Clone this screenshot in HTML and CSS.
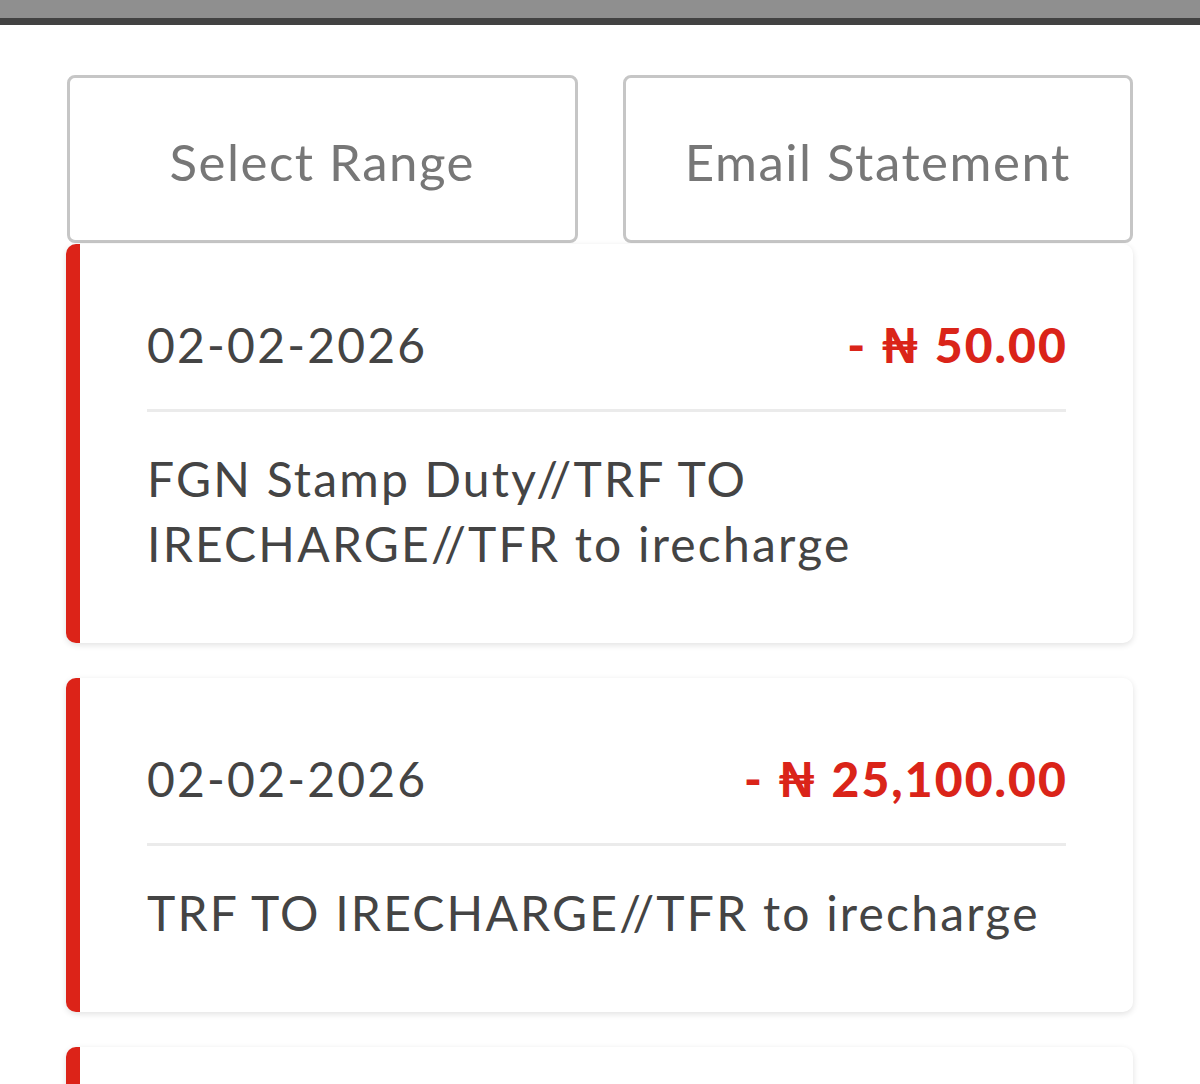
FILE: index.html
```html
<!DOCTYPE html>
<html>
<head>
	<title>Statement</title>
	<link rel="stylesheet" href="styles.css">
</head>
<body>
	<div class="topbar"></div>
	<div class="page">
		<div class="actions">
			<button class="action">Select Range</button>
			<button class="action">Email Statement</button>
		</div>
		<div class="list">
			<div class="txn">
				<div class="txn-head">
					<span class="date">02-02-2026</span>
					<span class="amount">- &#8358; 50.00</span>
				</div>
				<div class="desc">FGN Stamp Duty//TRF TO IRECHARGE//TFR to irecharge</div>
			</div>
			<div class="txn">
				<div class="txn-head">
					<span class="date">02-02-2026</span>
					<span class="amount">- &#8358; 25,100.00</span>
				</div>
				<div class="desc">TRF TO IRECHARGE//TFR to irecharge</div>
			</div>
			<div class="txn">
				<div class="txn-head">
					<span class="date">02-02-2026</span>
					<span class="amount">- &#8358; 100.00</span>
				</div>
				<div class="desc">TRF TO IRECHARGE//TFR to irecharge</div>
			</div>
		</div>
	</div>
</body>
</html>
```

FILE: styles.css
```css
body {
	margin: 0;
	background-color: #fff;
	font-family: Lato, "Noto Sans", sans-serif;
	color: #444;
	overflow: hidden;
}
.topbar {
	height: 18px;
	background-color: #8f8f8f;
	border-bottom: 7px solid #424242;
}
.page {
	padding: 50px 67px 0 66px;
}
.actions {
	display: flex;
	gap: 45px;
	padding-left: 1px;
}
.action {
	flex: 1;
	height: 168px;
	padding-top: 6px;
	background-color: #fff;
	border: 3px solid #c6c6c6;
	border-radius: 8px;
	font-family: inherit;
	font-size: 51px;
	letter-spacing: 1.5px;
	color: #777;
}
.list {
	display: flex;
	flex-direction: column;
	gap: 35px;
	margin-top: 1px;
}
.txn {
	background-color: #fff;
	border-left: 14px solid #dc2318;
	border-radius: 10px;
	box-shadow: 0 2px 6px rgba(0, 0, 0, 0.12);
	padding: 68px 67px 67px 67px;
}
.txn-head {
	display: flex;
	justify-content: space-between;
	align-items: center;
	font-size: 48px;
	line-height: 66px;
	letter-spacing: 2.2px;
	padding-bottom: 31px;
	border-bottom: 3px solid #ebebeb;
}
.amount {
	color: #da2419;
	font-weight: 900;
	letter-spacing: 2.1px;
	margin-right: -2px;
}
.desc {
	font-size: 48px;
	line-height: 65px;
	letter-spacing: 2.2px;
	margin-top: 34px;
}
```
